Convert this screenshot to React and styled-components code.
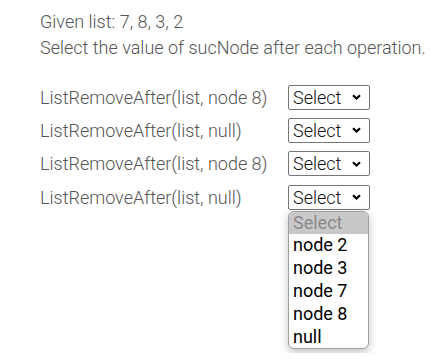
import React from "react";
import styled, { createGlobalStyle } from "styled-components";

const Global = createGlobalStyle`
  body {
    margin: 8px;
    font-family: Roboto, "Liberation Sans", sans-serif;
    background: #fff;
  }
`;

const Page = styled.div`
  min-height: 345px;
  box-sizing: border-box;
  padding: 1px 0 0 32px;
  color: #555;
  font-size: 18px;
  font-weight: 300;
`;

const Intro = styled.p`
  margin: 0;
  line-height: 26px;
`;

const Rows = styled.div`
  display: flex;
  flex-direction: column;
  gap: 8.4px;
  margin-top: 23.5px;
`;

const Row = styled.div`
  display: flex;
  align-items: center;
  height: 25px;
  position: relative;
`;

const Label = styled.span`
  width: 248px;
  white-space: nowrap;
`;

const SelectBox = styled.div`
  box-sizing: border-box;
  width: 82px;
  height: 25px;
  border: 1px solid #767676;
  border-radius: 2px;
  display: flex;
  align-items: center;
  justify-content: space-between;
  padding: 0 8px 0 4px;
  font-size: 18px;
  font-weight: 300;
  color: #111;
`;

const Menu = styled.div`
  position: absolute;
  left: 248px;
  top: 26px;
  width: 81px;
  box-sizing: border-box;
  background: #fff;
  border: 1px solid #a0a0a0;
  border-radius: 6px;
  overflow: hidden;
  box-shadow: 0 3px 8px rgba(0, 0, 0, 0.25);
  font-size: 18px;
  font-weight: 400;
  z-index: 2;
`;

const Option = styled.div`
  height: 22.8px;
  line-height: 22.8px;
  padding-left: 4px;
  color: ${(p) => (p.$placeholder ? "#8a8a8a" : "#000")};
  background: ${(p) => (p.$placeholder ? "#c8c8c8" : "transparent")};
`;

const Chevron = () => (
  <svg width="9" height="6" viewBox="0 0 9 6">
    <path d="M1 1.2 L4.5 4.5 L8 1.2" fill="none" stroke="#000" strokeWidth="2.2" />
  </svg>
);

const rows = [
  "ListRemoveAfter(list, node 8)",
  "ListRemoveAfter(list, null)",
  "ListRemoveAfter(list, node 8)",
  "ListRemoveAfter(list, null)",
];

const options = ["node 2", "node 3", "node 7", "node 8", "null"];

export default function App() {
  return (
    <>
      <Global />
      <Page>
        <Intro>Given list: 7, 8, 3, 2</Intro>
        <Intro>Select the value of sucNode after each operation.</Intro>
        <Rows>
          {rows.map((r, i) => (
            <Row key={i}>
              <Label>{r}</Label>
              <SelectBox>
                <span>Select</span>
                <Chevron />
              </SelectBox>
              {i === 3 && (
                <Menu>
                  <Option $placeholder>Select</Option>
                  {options.map((o) => (
                    <Option key={o}>{o}</Option>
                  ))}
                </Menu>
              )}
            </Row>
          ))}
        </Rows>
      </Page>
    </>
  );
}
